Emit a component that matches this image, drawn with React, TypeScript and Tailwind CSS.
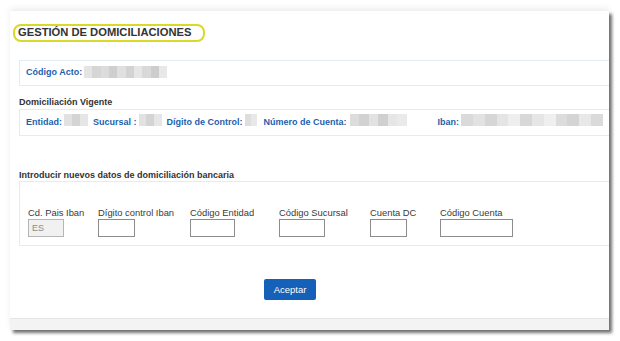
const blue = 'text-[#1d5fae]';

function Blur({ w, tones }: { w: number; tones: string[] }) {
  return (
    <span className="inline-flex h-[12px] overflow-hidden" style={{ width: w }}>
      {tones.map((t, i) => (
        <span key={i} className="h-full flex-1" style={{ background: t }} />
      ))}
    </span>
  );
}

const g1 = ['#e4e4e4', '#d6d6d6', '#dcdcdc', '#cfcfcf', '#e0e0e0', '#d3d3d3', '#e6e6e6', '#d9d9d9', '#cdcdcd', '#e8e8e8'];
const g2 = ['#e2e2e2', '#d4d4d4', '#e6e6e6'];

// col = total column width (label start to next label start)
function Field({ label, w, col, value, gray }: { label: string; w: number; col?: number; value?: string; gray?: boolean }) {
  return (
    <div className="flex flex-col shrink-0" style={{ width: col }}>
      <span className="text-[9.4px] leading-[12px] text-[#3a3a3a] whitespace-nowrap">{label}</span>
      <div
        className={`h-[18px] border pl-[3px] text-[9px] leading-[16px] text-[#8a8a8a] ${gray ? 'bg-[#f1f1f1] border-[#b5b5b5]' : 'bg-white border-[#8c8c8c]'}`}
        style={{ width: w }}
      >
        {value}
      </div>
    </div>
  );
}

export default function App() {
  return (
    <div className="w-[620px] h-[341px] bg-white overflow-hidden font-['Liberation_Sans',Arial,sans-serif] pt-[11px] pl-[10px]">
      <div className="w-[599px] h-[319px] bg-white flex flex-col shadow-[3px_3px_3px_rgba(0,0,0,0.55),0_-3px_6px_rgba(0,0,0,0.07)]">
        <div className="flex-1 flex flex-col pl-[9px]">
          <div className="mt-[13px] -ml-[6px] w-[192px] h-[18px] rounded-[8px] border-2 border-[#d9d92a] flex items-center pl-[3px]">
            <span className="text-[11.2px] font-bold text-[#333] leading-none">GESTIÓN DE DOMICILIACIONES</span>
          </div>

          <div className="mt-[18px] h-[26px] border border-[#e3ebf3] border-r-0 flex items-center pl-[6px]">
            <span className={`text-[9px] font-bold ${blue}`}>Código Acto:</span>
            <span className="ml-[2px]">
              <Blur w={83} tones={g1} />
            </span>
          </div>

          <div className="mt-[10px] text-[9px] font-bold text-[#333] leading-[12px]">Domiciliación Vigente</div>
          <div className="mt-[1px] h-[27px] border border-[#e3ebf3] border-r-0 flex items-center pl-[6px] text-[9px] font-bold">
            <span className={blue}>Entidad:</span>
            <span className="ml-[2px]"><Blur w={24} tones={g2} /></span>
            <span className={`${blue} ml-[5px]`}>Sucursal :</span>
            <span className="ml-[2px]"><Blur w={23} tones={g2} /></span>
            <span className={`${blue} ml-[5px]`}>Dígito de Control:</span>
            <span className="ml-[2px]"><Blur w={12} tones={['#dedede', '#e8e8e8']} /></span>
            <span className={`${blue} ml-[7px]`}>Número de Cuenta:</span>
            <span className="ml-[3px]"><Blur w={57} tones={['#dcdcdc', '#d2d2d2', '#e2e2e2', '#d0d0d0', '#e6e6e6', '#eaeaea']} /></span>
            <span className={`${blue} ml-[31px]`}>Iban:</span>
            <span className="ml-[2px]"><Blur w={142} tones={['#dadada', '#e2e2e2', '#d6d6d6', '#e4e4e4', '#eeeeee', '#d8d8d8', '#e6e6e6', '#efefef', '#dcdcdc', '#d4d4d4', '#e8e8e8', '#dadada']} /></span>
          </div>

          <div className="mt-[33px] text-[9px] font-bold text-[#333] leading-[12px]">Introducir nuevos datos de domiciliación bancaria</div>
          <div className="h-[65px] border border-[#e3ebf3] border-r-0 flex items-start pt-[25px] pl-[8px]">
            <Field label="Cd. Pais Iban" w={36} col={70} value="ES" gray />
            <Field label="Dígito control Iban" w={37} col={92} />
            <Field label="Código Entidad" w={45} col={89} />
            <Field label="Código Sucursal" w={46} col={91} />
            <Field label="Cuenta DC" w={37} col={70} />
            <Field label="Código Cuenta" w={73} />
          </div>

          <div className="mt-[33px] flex pl-[245px]">
            <button className="w-[52px] h-[21px] bg-[#1560b8] rounded-[2px] text-white text-[9.5px] leading-none">Aceptar</button>
          </div>
        </div>
        <div className="h-[12px] bg-[#f3f3f3] border-t border-[#e6e6e6]" />
      </div>
    </div>
  );
}
